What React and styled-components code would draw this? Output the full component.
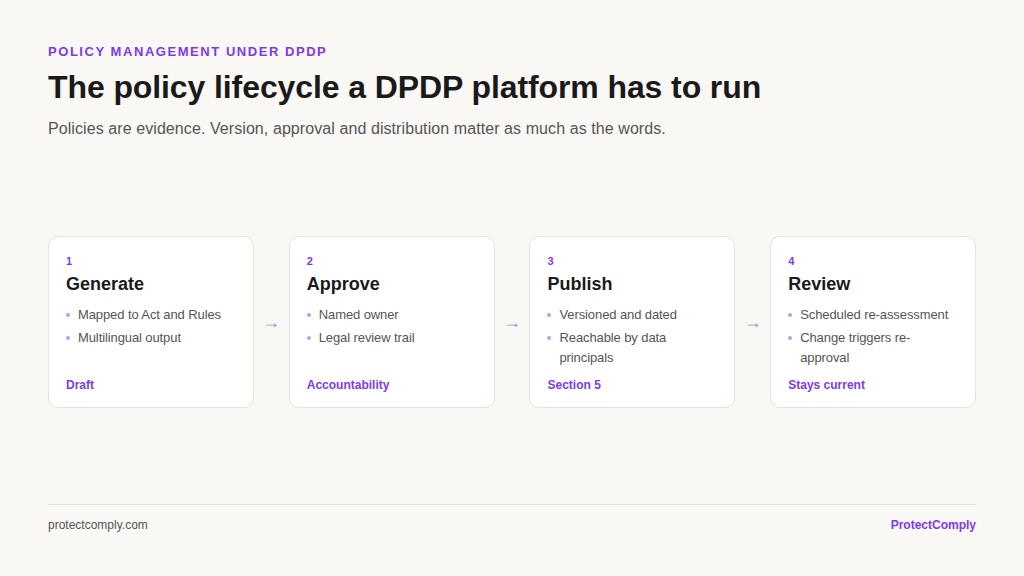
import React from "react";
import styled, { createGlobalStyle } from "styled-components";

const Global = createGlobalStyle`
  html, body { margin: 0; padding: 0; background: #f9f8f5; }
  body { font-family: "Liberation Sans", Arial, sans-serif; }
`;

const Page = styled.div`
  width: 1024px; height: 576px; box-sizing: border-box;
  padding: 44px 48px 0; display: flex; flex-direction: column;
`;
const Eyebrow = styled.div`
  font-size: 13px; font-weight: 700; letter-spacing: 1.55px; color: #7c3aed; text-transform: uppercase;
`;
const Title = styled.h1`
  margin: 10px 0 0; font-size: 32px; font-weight: 700; color: #1a1a1a; letter-spacing: -0.1px;
`;
const Sub = styled.p`
  margin: 14px 0 0; font-size: 16px; letter-spacing: 0.08px; color: #555;
`;
const Flow = styled.div`
  margin-top: 98px; display: flex; align-items: center;
`;
const Card = styled.div`
  width: 206px; height: 172px; box-sizing: border-box; background: #fff;
  border: 1px solid #e6e3de; border-radius: 10px; padding: 18px 17px 15px;
  display: flex; flex-direction: column;
`;
const Num = styled.div`font-size: 11px; font-weight: 700; color: #7c3aed;`;
const CardTitle = styled.div`margin-top: 7px; font-size: 18px; font-weight: 700; color: #1a1a1a;`;
const List = styled.ul`
  list-style: none; margin: 10px 0 0; padding: 0; flex: 1;
`;
const Item = styled.li`
  position: relative; padding-left: 12px; font-size: 13px; letter-spacing: -0.1px; line-height: 20px; color: #555; margin-bottom: 3px;
  &::before { content: ""; position: absolute; left: 0; top: 8px; width: 4px; height: 4px; border-radius: 50%; background: #b79cf0; }
`;
const Tag = styled.div`font-size: 12px; font-weight: 700; color: #7c3aed;`;
const Arrow = styled.div`width: 35px; text-align: center; color: #a98be8; font-size: 18px;`;
const Footer = styled.div`
  margin-top: auto; margin-bottom: 44px; border-top: 1px solid #e2dfda; padding-top: 13px;
  display: flex; justify-content: space-between; font-size: 12px; color: #555;
`;
const Brand = styled.span`color: #7c3aed; font-weight: 700;`;

const steps = [
  ["1", "Generate", ["Mapped to Act and Rules", "Multilingual output"], "Draft"],
  ["2", "Approve", ["Named owner", "Legal review trail"], "Accountability"],
  ["3", "Publish", ["Versioned and dated", "Reachable by data principals"], "Section 5"],
  ["4", "Review", ["Scheduled re-assessment", "Change triggers re-approval"], "Stays current"],
];

export default function App() {
  return (
    <>
      <Global />
      <Page>
        <Eyebrow>Policy management under DPDP</Eyebrow>
        <Title>The policy lifecycle a DPDP platform has to run</Title>
        <Sub>Policies are evidence. Version, approval and distribution matter as much as the words.</Sub>
        <Flow>
          {steps.map(([n, t, items, tag], i) => (
            <React.Fragment key={n}>
              {i > 0 && <Arrow>→</Arrow>}
              <Card>
                <Num>{n}</Num>
                <CardTitle>{t}</CardTitle>
                <List>{items.map((x) => <Item key={x}>{x}</Item>)}</List>
                <Tag>{tag}</Tag>
              </Card>
            </React.Fragment>
          ))}
        </Flow>
        <Footer>
          <span>protectcomply.com</span>
          <Brand>ProtectComply</Brand>
        </Footer>
      </Page>
    </>
  );
}
